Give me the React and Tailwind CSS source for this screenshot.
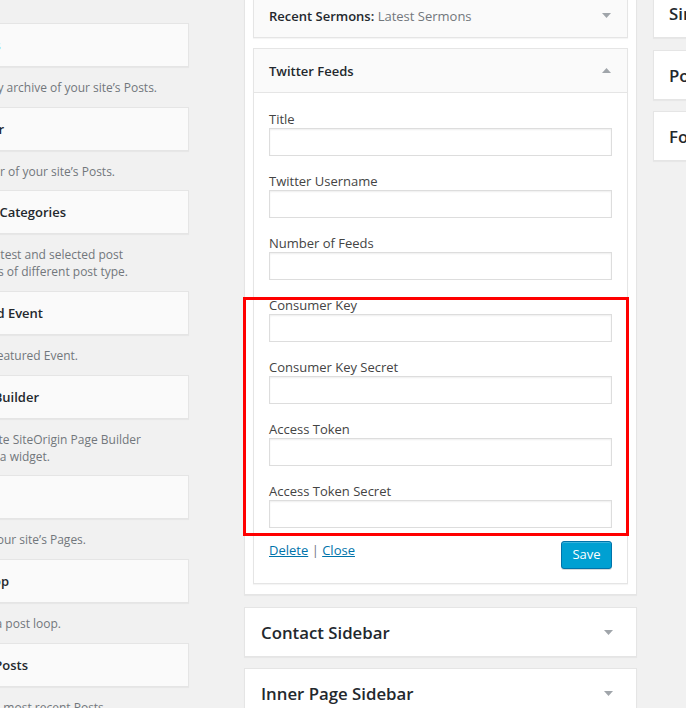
import React from "react";

const leftItems = [
  { title: "Archives", titleEnd: 0.5, blue: true, desc: ["A monthly archive of your site’s Posts."], ends: [157] },
  { title: "Calendar", titleEnd: 4, desc: ["A calendar of your site’s Posts."], ends: [115] },
  { title: "Recent Posts by Categories", titleEnd: 66, desc: ["Display latest and selected post", "from categories of different post type."], ends: [123, 128] },
  { title: "Featured Event", titleEnd: 43, desc: ["Displays Featured Event."], ends: [78] },
  { title: "Layout Builder", titleEnd: 39, desc: ["A complete SiteOrigin Page Builder", "layout as a widget."], ends: [141, 50] },
  { title: "Pages", titleEnd: -6, desc: ["A list of your site’s Pages."], ends: [86] },
  { title: "Post Loop", titleEnd: 9, desc: ["Displays a post loop."], ends: [61] },
  { title: "Recent Posts", titleEnd: 28, desc: ["Your site’s most recent Posts."], ends: [107] },
];

const fields = [
  "Title",
  "Twitter Username",
  "Number of Feeds",
  "Consumer Key",
  "Consumer Key Secret",
  "Access Token",
  "Access Token Secret",
];

function Arrow({ up }) {
  return (
    <svg width="9" height="5" viewBox="0 0 9 5" className="shrink-0">
      <path d={up ? "M0 5L4.5 0L9 5Z" : "M0 0H9L4.5 5Z"} fill="#a0a5aa" />
    </svg>
  );
}

function LeftColumn() {
  return (
    <div className="w-[209px] ml-[-20px] shrink-0 pt-[23px] flex flex-col">
      {leftItems.map((it, i) => (
        <div key={i}>
          <div className="h-[44px] bg-[#fafafa] border border-[#e5e5e5] shadow-[0_1px_1px_rgba(0,0,0,0.04)] flex items-center">
            <div className="flex justify-end whitespace-nowrap" style={{ width: it.titleEnd + 19 }}>
              <span className={"text-[13px] font-semibold leading-[18px] " + (it.blue ? "text-[#00a0d2]" : "text-[#23282d]")}>
                {it.title}
              </span>
            </div>
          </div>
          <div className="pt-[12px] pb-[10.7px]">
            {it.desc.map((d, j) => (
              <div key={j} className="flex justify-end whitespace-nowrap" style={{ width: it.ends[j] + 20 }}>
                <span className="text-[12px] leading-[17px] text-[#72777c]">{d}</span>
              </div>
            ))}
          </div>
        </div>
      ))}
    </div>
  );
}

function CenterColumn() {
  return (
    <div className="w-[393px] shrink-0 ml-[55px] flex flex-col">
      <div className="mt-[-18px] bg-white border border-[#e5e5e5] shadow-[0_1px_1px_rgba(0,0,0,0.04)] pt-[10px] px-[8px]">
        {/* Recent Sermons */}
        <div className="border border-[#e5e5e5] bg-[#fafafa] shadow-[0_1px_1px_rgba(0,0,0,0.04)] mb-[10px]">
          <div className="h-[43px] flex items-center justify-between pl-[15px] pr-[16px]">
            <div className="text-[13px] leading-[18px] whitespace-nowrap">
              <span className="font-semibold text-[#23282d]">Recent Sermons:</span>
              <span className="text-[#72777c]"> Latest Sermons</span>
            </div>
            <Arrow />
          </div>
        </div>
        {/* Twitter Feeds */}
        <div className="border border-[#e5e5e5] bg-white shadow-[0_1px_1px_rgba(0,0,0,0.04)] mb-[10px]">
          <div className="h-[43px] bg-[#fafafa] flex items-center justify-between pl-[15px] pr-[16px]">
            <div className="text-[13px] leading-[18px] font-semibold text-[#23282d]">Twitter Feeds</div>
            <Arrow up />
          </div>
          <div className="border-t border-[#e5e5e5] px-[15px] pt-[17px] pb-[14px]">
            {fields.map((f, i) => (
              <div key={f} className={i === 0 ? "" : "mt-[16px]"}>
                <div className="text-[13px] leading-[18px] text-[#444]">{f}</div>
                <div className="h-[28px] border border-[#ddd] bg-white shadow-[inset_0_1px_2px_rgba(0,0,0,0.07)]" />
              </div>
            ))}
            <div className="mt-[13px] flex justify-between items-start">
              <div className="text-[13px] leading-[18px] text-[#72777c]">
                <span className="text-[#0073aa] underline">Delete</span>
                <span> | </span>
                <span className="text-[#0073aa] underline">Close</span>
              </div>
              <div className="w-[51px] h-[28px] rounded-[3px] bg-[#00a0d2] border border-[#0073aa] text-white text-[13px] flex items-center justify-center shadow-[inset_0_1px_0_rgba(120,200,230,0.5),0_1px_0_rgba(0,0,0,0.15)]">
                Save
              </div>
            </div>
          </div>
        </div>
      </div>
      <div className="mt-[12px] h-[50px] bg-white border border-[#e5e5e5] shadow-[0_1px_1px_rgba(0,0,0,0.04)] flex items-center justify-between pl-[16px] pr-[23px]">
        <div className="text-[16.8px] font-semibold text-[#23282d] pt-[2px]">Contact Sidebar</div>
        <Arrow />
      </div>
      <div className="mt-[11px] h-[50px] bg-white border border-[#e5e5e5] shadow-[0_1px_1px_rgba(0,0,0,0.04)] flex items-center justify-between pl-[16px] pr-[23px]">
        <div className="text-[16.8px] font-semibold text-[#23282d] pt-[2px]">Inner Page Sidebar</div>
        <Arrow />
      </div>
    </div>
  );
}

function RightColumn() {
  const titles = ["Single Page Sidebar", "Posts Sidebar", "Footer Area"];
  return (
    <div className="w-[250px] shrink-0 ml-[16px] mt-[-12px] flex flex-col">
      {titles.map((t, i) => (
        <div
          key={t}
          className={
            "h-[50px] bg-white border border-[#e5e5e5] shadow-[0_1px_1px_rgba(0,0,0,0.04)] flex items-center pl-[15px] " +
            (i === 0 ? "" : i === 1 ? "mt-[12px]" : "mt-[11px]")
          }
        >
          <div className="text-[16.8px] font-semibold text-[#23282d] whitespace-nowrap pt-[2px]">{t}</div>
        </div>
      ))}
    </div>
  );
}

export default function App() {
  return (
    <div
      className="relative w-[686px] h-[708px] overflow-hidden bg-[#f1f1f1]"
      style={{ fontFamily: '"Open Sans", "Noto Sans", sans-serif' }}
    >
      <div className="flex items-start">
        <LeftColumn />
        <CenterColumn />
        <RightColumn />
      </div>
      <div className="absolute left-[243px] top-[297px] w-[386px] h-[239px] border-[3px] border-[#ff0000] pointer-events-none" />
    </div>
  );
}
